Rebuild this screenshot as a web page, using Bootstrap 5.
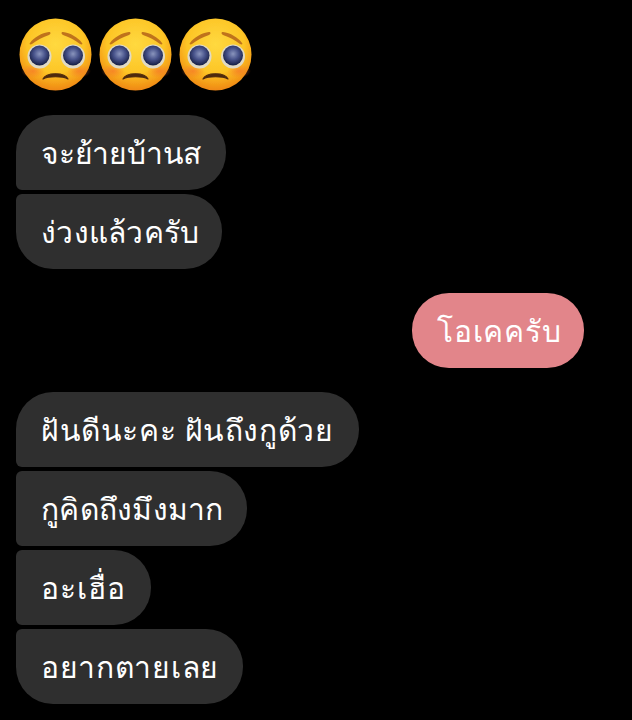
<!DOCTYPE html>
<html lang="th">

<head>
    <meta charset="UTF-8">
    <meta name="viewport" content="width=device-width, initial-scale=1.0">
    <title>Chat</title>
    <link href="https://cdn.jsdelivr.net/npm/bootstrap@5.3.3/dist/css/bootstrap.min.css" rel="stylesheet">
    <script src="https://cdn.jsdelivr.net/npm/bootstrap@5.3.3/dist/js/bootstrap.bundle.min.js"></script>
    <style>
        html, body {
            background-color: #000;
            height: 720px;
            overflow: hidden;
        }

        .chat-wrap {
            padding: 18px 48px 0 16px;
        }

        .emoji-row {
            gap: 7px;
            padding-left: 3px;
            margin-bottom: 24px;
        }

        .bubble {
            height: 75px;
            padding: 0 25px;
            font-family: "Noto Sans", "Liberation Sans", sans-serif;
            font-size: 30px;
            letter-spacing: .4px;
            line-height: 75px;
            white-space: nowrap;
            color: #fff;
            background-color: #2f2f2f;
            border-radius: 37px;
        }

        .bubble.join-down {
            border-bottom-left-radius: 6px;
        }

        .bubble.join-up {
            border-top-left-radius: 6px;
        }

        .bubble.mine {
            width: 172px;
            letter-spacing: .8px;
            background-color: #e2858a;
        }

        .bubble.msg-a { width: 210px; letter-spacing: -.2px; }
        .bubble.msg-b { width: 206px; letter-spacing: .3px; }
        .bubble.msg-c { width: 343px; letter-spacing: .6px; }
        .bubble.msg-d { width: 231px; letter-spacing: .25px; }
        .bubble.msg-e { width: 135px; letter-spacing: .9px; }
        .bubble.msg-f { width: 227px; letter-spacing: .7px; }

        .msg-group {
            gap: 4px;
        }

        .after-gap {
            margin-top: 24px;
        }
    </style>
</head>

<body>
    <svg width="0" height="0" class="d-block">
        <defs>
            <radialGradient id="faceFill" cx="50%" cy="36%" r="66%">
                <stop offset="0" stop-color="#ffd940"/>
                <stop offset=".6" stop-color="#fdc526"/>
                <stop offset="1" stop-color="#ee8210"/>
            </radialGradient>
            <radialGradient id="blushFill">
                <stop offset="0" stop-color="#f6722a" stop-opacity=".65"/>
                <stop offset="1" stop-color="#f6722a" stop-opacity="0"/>
            </radialGradient>
            <radialGradient id="irisFill" cx="50%" cy="42%" r="58%">
                <stop offset="0" stop-color="#8a95bd"/>
                <stop offset=".5" stop-color="#47528a"/>
                <stop offset="1" stop-color="#171e42"/>
            </radialGradient>
            <filter id="softEdge" x="-5%" y="-5%" width="110%" height="110%">
                <feGaussianBlur stdDeviation=".45"/>
            </filter>
            <symbol id="pleading" viewBox="0 0 73 73">
                <g filter="url(#softEdge)">
                    <circle cx="36.500" cy="36.500" r="36" fill="url(#faceFill)"/>
                    <ellipse cx="14" cy="53" rx="12" ry="7" fill="url(#blushFill)"/>
                    <ellipse cx="60" cy="53" rx="12" ry="7" fill="url(#blushFill)"/>
                    <path d="M11 25C15 19 23 15 30 14C32 14 32 16 30 17C24 19 18 22 13 26C11 27 10 26 11 25Z" fill="#bf731b"/>
                    <path d="M63 25C59 19 51 15 44 14C42 14 42 16 44 17C50 19 56 22 61 26C63 27 64 26 63 25Z" fill="#bf731b"/>
                    <circle cx="20.500" cy="38.500" r="12" fill="#e0dac6"/>
                    <circle cx="54" cy="38.500" r="12" fill="#e0dac6"/>
                    <circle cx="20.500" cy="37.500" r="10" fill="url(#irisFill)"/>
                    <circle cx="54" cy="37.500" r="10" fill="url(#irisFill)"/>
                    <path d="M24 61C27 54 46 54 49 61C44 58 29 58 24 61Z" fill="#4f2c0e" stroke="#4f2c0e" stroke-width="1.200" stroke-linejoin="round"/>
                </g>
            </symbol>
        </defs>
    </svg>
    <div class="chat-wrap d-flex flex-column">
        <div class="emoji-row d-flex">
            <svg width="73" height="73"><use href="#pleading"/></svg>
            <svg width="73" height="73"><use href="#pleading"/></svg>
            <svg width="73" height="73"><use href="#pleading"/></svg>
        </div>
        <div class="msg-group d-flex flex-column align-items-start">
            <div class="bubble msg-a join-down">จะย้ายบ้านส</div>
            <div class="bubble msg-b join-up">ง่วงแล้วครับ</div>
        </div>
        <div class="after-gap d-flex justify-content-end">
            <div class="bubble mine">โอเคครับ</div>
        </div>
        <div class="after-gap msg-group d-flex flex-column align-items-start">
            <div class="bubble msg-c join-down">ฝันดีนะคะ ฝันถึงกูด้วย</div>
            <div class="bubble msg-d join-up join-down">กูคิดถึงมึงมาก</div>
            <div class="bubble msg-e join-up join-down">อะเฮื่อ</div>
            <div class="bubble msg-f join-up">อยากตายเลย</div>
        </div>
    </div>
</body>

</html>
